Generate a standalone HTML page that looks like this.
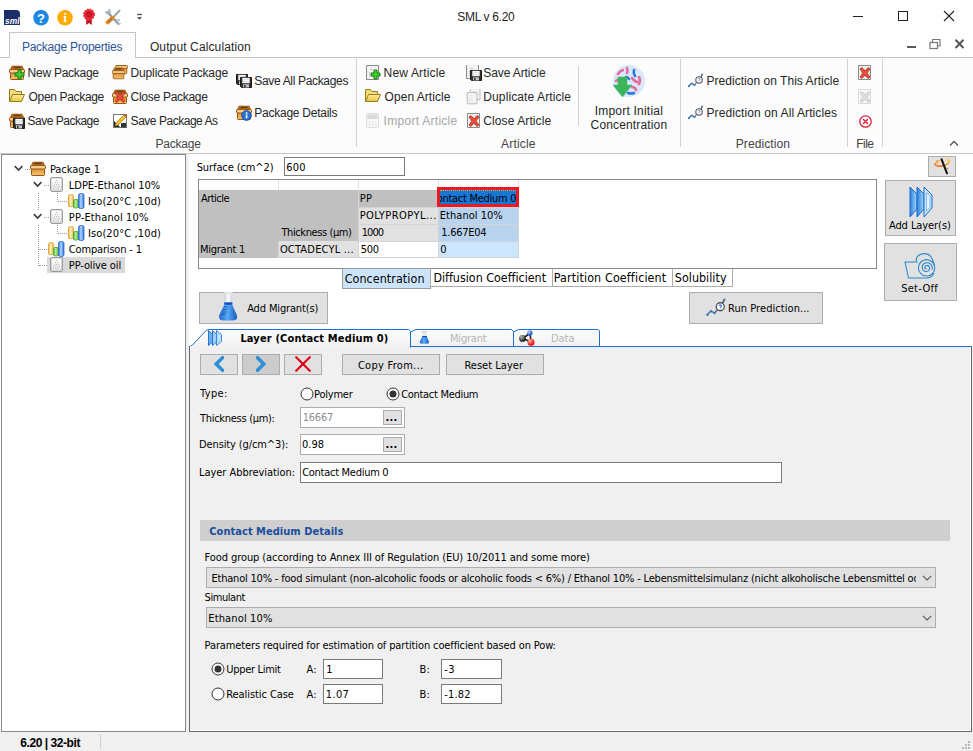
<!DOCTYPE html>
<html><head><meta charset="utf-8"><title>SML v 6.20</title>
<style>
*{box-sizing:border-box;margin:0;padding:0}
html,body{width:973px;height:751px;overflow:hidden;background:#fff}
body{position:relative;font-family:"Liberation Sans",sans-serif;font-size:12px;color:#1e1e1e}
.a{position:absolute;white-space:nowrap}
.sep{position:absolute;width:1px;background:#d2d2d2}
.btn{position:absolute;background:#e1e1e1;border:1px solid #adadad}
.inp{position:absolute;background:#fff;border:1px solid #7a7a7a}
.dv{position:absolute;border-left:1px dotted #a0a0a0;width:1px}
.dh{position:absolute;border-top:1px dotted #a0a0a0;height:1px}
</style></head><body>
<svg width="0" height="0" style="position:absolute">
<defs>
<linearGradient id="gbox" x1="0" y1="0" x2="0" y2="1"><stop offset="0" stop-color="#dc9030"/><stop offset="1" stop-color="#f4c678"/></linearGradient>
<linearGradient id="gfold" x1="0" y1="0" x2="0" y2="1"><stop offset="0" stop-color="#fbeea0"/><stop offset="1" stop-color="#e8c440"/></linearGradient>
<linearGradient id="gdoc" x1="0" y1="0" x2="0" y2="1"><stop offset="0" stop-color="#ffffff"/><stop offset="1" stop-color="#e6e6e6"/></linearGradient>
<linearGradient id="gy" x1="0" y1="0" x2="1" y2="0"><stop offset="0" stop-color="#f0b030"/><stop offset=".45" stop-color="#fff2c8"/><stop offset="1" stop-color="#eeb040"/></linearGradient>
<linearGradient id="gg" x1="0" y1="0" x2="1" y2="0"><stop offset="0" stop-color="#48b828"/><stop offset=".45" stop-color="#b8f0a0"/><stop offset="1" stop-color="#48b028"/></linearGradient>
<linearGradient id="gb" x1="0" y1="0" x2="1" y2="0"><stop offset="0" stop-color="#2a72d8"/><stop offset=".45" stop-color="#b0d8ff"/><stop offset="1" stop-color="#2a6cd0"/></linearGradient>
<symbol id="box" viewBox="0 0 16 16"><path d="M1.5 4.500L3 1.200H13L14.5 4.500Z" fill="#b8701c" stroke="#9a560e"/><path d="M4.5 2.500H11.5" stroke="#5a3408" stroke-width="1.2"/><rect x="1.5" y="7.5" width="13" height="7" rx=".8" fill="url(#gbox)" stroke="#9a560e"/><rect x=".5" y="4.5" width="15" height="3.5" rx=".8" fill="#f2cc90" stroke="#9a560e"/></symbol>
<symbol id="plus" viewBox="0 0 16 16"><path d="M9 5h3v3h3v3h-3v3h-3v-3h-3v-3h3z" fill="#3fd02c" stroke="#1d7a12" stroke-width="1"/></symbol>
<symbol id="folder" viewBox="0 0 16 16"><path d="M.5 13.5 V1.5 H5.5 L7 3.5 H12.5 V6.5" fill="#f3dc7a" stroke="#9a7a1a"/><path d="M.5 13.5 L3.5 6.5 H15.5 L12.5 13.500Z" fill="url(#gfold)" stroke="#9a7a1a"/></symbol>
<symbol id="floppy" viewBox="0 0 16 16"><path d="M4.5 5.5 H15.5 V15.5 H5.5 L4.5 14.500Z" fill="#303030" stroke="#1a1a1a"/><rect x="6.3" y="5.8" width="7.4" height="5.4" fill="#f8f8f8"/><path d="M7 7.500h6M7 9.500h6" stroke="#d0d0d0" stroke-width=".6"/><rect x="7" y="12.3" width="6" height="3.2" fill="#c4c4c4"/><rect x="8" y="13" width="1.6" height="2.5" fill="#333"/></symbol>
<symbol id="redx" viewBox="0 0 16 16"><path d="M3 4 L5 2.5 L8 6 L11 2.5 L13 4 L10 8 L13 12 L11 13.5 L8 10 L5 13.5 L3 12 L6 8Z" fill="#e8503c" stroke="#b02818" stroke-width=".8"/></symbol>
<symbol id="info" viewBox="0 0 16 16"><circle cx="10.5" cy="10.5" r="4.8" fill="#2a72d8" stroke="#184a9c"/><rect x="9.8" y="9.5" width="1.6" height="3.8" fill="#fff"/><rect x="9.8" y="7.3" width="1.6" height="1.5" fill="#fff"/></symbol>
<symbol id="doc" viewBox="0 0 16 16"><path d="M1.5 .5 H13.5 V14.5 H1.500Z" fill="#f2f2f2" stroke="#8a8a8a"/><path d="M4 9.500h1M6 9.500h1M8 9.500h1M4 11.500h1M6 11.500h1M8 11.500h1M4 7.500h1M6 7.500h1M5 4.500h3" stroke="#c4c4c4"/></symbol>
<symbol id="pred" viewBox="0 0 18 16"><path d="M1.5 13.5 L4.5 10.5 L7.5 12 L10 9" fill="none" stroke="#4a6a8a" stroke-width="1.1"/><circle cx="1.8" cy="13.3" r="1" fill="#3a78c8"/><circle cx="4.6" cy="10.6" r="1" fill="#3a78c8"/><circle cx="7.5" cy="12" r="1" fill="#3a78c8"/><circle cx="12" cy="7" r="3.2" fill="#fff" stroke="#555" stroke-width="1.1"/><path d="M13.8 4 L15.2 1.6" stroke="#555" stroke-width="1.2"/><circle cx="15.3" cy="1.3" r=".9" fill="#3a78c8"/><path d="M11 6.200c.3-1 2-1 2 0 0 .8-1 .8-1 1.600M12 8.600v.6" stroke="#3a78c8" stroke-width=".9" fill="none"/></symbol>
<symbol id="chart" viewBox="0 0 17 16"><rect x=".5" y="1.7" width="5" height="12" rx="1.5" fill="url(#gy)" stroke="#d8a030" stroke-width=".8"/><rect x="5.5" y="6.5" width="5" height="8.5" rx="1.5" fill="url(#gg)" stroke="#4aa828" stroke-width=".8"/><rect x="10.5" y=".5" width="5.5" height="15" rx="1.8" fill="url(#gb)" stroke="#2a6cd0" stroke-width=".8"/></symbol>
<symbol id="tdoc" viewBox="0 0 16 16"><rect x="2.650" y=".65" width="11.7" height="13.7" rx="1.5" fill="url(#gdoc)" stroke="#9c9c9c" stroke-width="1.3"/><path d="M8 3.500h1M7 5.500h1M9 5.500h1M6 7.500h1M8 7.500h1M10 7.500h1M5 9.500h1M7 9.500h1M9 9.500h1M11 9.500h1M5 11.500h1M7.5 11.500h1M10 11.500h1" stroke="#bdbdbd"/></symbol>
</defs></svg>
<div class="a" style="left:0;top:0;width:973px;height:32px;background:#fff"></div>
<div class="a" style="left:457.3px;top:9px;line-height:16px;font-family:'Liberation Sans',sans-serif;font-size:12px;letter-spacing:-0.322px;color:#1e1e1e;">SML v 6.20</div><svg class="a" style="left:4px;top:9px" width="17" height="16" viewBox="0 0 17 16"><path d="M0 1H12Q16 1 16 5V16H0Z" fill="#1a2f6a"/><text x="1" y="14.5" font-family="Liberation Sans,sans-serif" font-size="9" font-weight="bold" font-style="italic" fill="#fff" textLength="14.5" lengthAdjust="spacingAndGlyphs">sml</text></svg>
<svg class="a" style="left:33px;top:10px" width="16" height="16"><circle cx="8" cy="7.7" r="7.8" fill="#1e88e5"/><text x="8" y="12.5" text-anchor="middle" font-family="Liberation Sans,sans-serif" font-size="13" font-weight="bold" fill="#fff">?</text></svg>
<svg class="a" style="left:57px;top:10px" width="16" height="16"><circle cx="8" cy="7.7" r="7.8" fill="#ffab00"/><text x="8" y="12" text-anchor="middle" font-family="Liberation Serif,serif" font-size="13" font-weight="bold" fill="#fff">i</text></svg>
<svg class="a" style="left:82px;top:8px" width="14" height="18"><path d="M4.2 9v8l2.8-2 2.8 2V9z" fill="#c4141c"/><circle cx="7" cy="6.5" r="5.3" fill="#e82c3a" stroke="#e82c3a" stroke-width="1.4" stroke-dasharray="1.6 1.180"/><circle cx="7" cy="6.5" r="3.2" fill="#c81828"/></svg>
<svg class="a" style="left:104px;top:8px" width="18" height="18"><path d="M3.5 4l5 5.5 6 6.5" stroke="#8c9c9e" stroke-width="2.2" stroke-linecap="round" fill="none"/><path d="M1.5 3.500q1.5 3 4 1.5 1.5-2-1-4" fill="none" stroke="#a4b2b4" stroke-width="1.6"/><path d="M12 12.500q2-1.5 4 .5M13 16q2 1 3.5-1" fill="none" stroke="#b4c0c2" stroke-width="1.5"/><path d="M15.5 2.500L9.5 9" stroke="#9aa8aa" stroke-width="2" stroke-linecap="round"/><path d="M8.5 10L3.5 14.5" stroke="#f08a1c" stroke-width="4" stroke-linecap="round"/><path d="M8 10.500L4.5 13.7" stroke="#8a7a6a" stroke-width="1.4" stroke-linecap="round"/></svg>
<svg class="a" style="left:136px;top:13px" width="8" height="8"><path d="M1 1.500h5" stroke="#555" stroke-width="1.3"/><path d="M1 4h5L3.5 6.800z" fill="#555"/></svg>
<svg class="a" style="left:840px;top:0" width="133" height="32"><path d="M13 16.500h10" stroke="#222" stroke-width="1"/><rect x="58.5" y="11.5" width="9" height="9" fill="none" stroke="#222" stroke-width="1"/><path d="M104 11l10 10M114 11l-10 10" stroke="#222" stroke-width="1.1"/></svg>
<svg class="a" style="left:900px;top:36px" width="73" height="18"><path d="M7 11h9" stroke="#5a5a5a" stroke-width="2"/><path d="M32.5 6.500v-3h7.500v6.500h-2.5" fill="none" stroke="#777" stroke-width="1.2"/><rect x="30" y="6.5" width="7.5" height="6" fill="#fff" stroke="#777" stroke-width="1.2"/><path d="M55.5 3.700l8 8.300M63.5 3.700l-8 8.3" stroke="#555" stroke-width="2"/></svg>
<div class="a" style="left:0;top:57px;width:973px;height:97px;background:#fcfcfc;border-top:1px solid #c6c6c6;border-bottom:1px solid #c9c9c9"></div>
<div class="a" style="left:9px;top:32px;width:127px;height:26px;border:1px solid #c6c6c6;border-bottom:0;background:#fcfcfc"></div>
<div class="a" style="left:21.9px;top:39px;line-height:16px;font-family:'Liberation Sans',sans-serif;font-size:12px;letter-spacing:-0.247px;color:#2b579a;">Package Properties</div><div class="a" style="left:149.9px;top:39px;line-height:16px;font-family:'Liberation Sans',sans-serif;font-size:12px;letter-spacing:0.124px;color:#262626;">Output Calculation</div><svg class="a" style="left:9px;top:65px;" width="16" height="16"><use href="#box"/><use href="#plus"/></svg>
<div class="a" style="left:27.6px;top:65px;line-height:16px;font-family:'Liberation Sans',sans-serif;font-size:12px;letter-spacing:-0.26px;color:#262626;">New Package</div><svg class="a" style="left:9px;top:88px;" width="16" height="16"><use href="#folder"/></svg>
<div class="a" style="left:28.6px;top:89px;line-height:16px;font-family:'Liberation Sans',sans-serif;font-size:12px;letter-spacing:-0.336px;color:#262626;">Open Package</div><svg class="a" style="left:9px;top:113px;" width="16" height="16"><use href="#box"/><use href="#floppy"/></svg>
<div class="a" style="left:27.6px;top:113px;line-height:16px;font-family:'Liberation Sans',sans-serif;font-size:12px;letter-spacing:-0.509px;color:#262626;">Save Package</div><svg class="a" style="left:112px;top:65px;" width="16" height="16"><use href="#box" x="3" y="-3" width="13" height="13"/><use href="#box" x="0" y="2" width="13" height="13"/></svg>
<div class="a" style="left:130.6px;top:65px;line-height:16px;font-family:'Liberation Sans',sans-serif;font-size:12px;letter-spacing:-0.162px;color:#262626;">Duplicate Package</div><svg class="a" style="left:112px;top:89px;" width="16" height="16"><use href="#box"/><use href="#redx"/></svg>
<div class="a" style="left:130.6px;top:89px;line-height:16px;font-family:'Liberation Sans',sans-serif;font-size:12px;letter-spacing:-0.283px;color:#262626;">Close Package</div><svg class="a" style="left:112px;top:113px;" width="16" height="16"><rect x="1.5" y="1.5" width="13" height="13" fill="#fff" stroke="#777"/><path d="M2 14 L2 8 L8 14Z" fill="#222"/><rect x="9" y="10" width="5" height="4.5" fill="#333"/><path d="M3 13 L4 10 L12 2 L14 4 L6 12Z" fill="#f4c430" stroke="#a07810" stroke-width=".8"/><path d="M12 2 L13 1 L15 3 L14 4Z" fill="#e04030"/></svg>
<div class="a" style="left:130.6px;top:113px;line-height:16px;font-family:'Liberation Sans',sans-serif;font-size:12px;letter-spacing:-0.471px;color:#262626;">Save Package As</div><svg class="a" style="left:236px;top:72px;" width="16" height="16"><use href="#floppy" x="-4" y="-3"/><use href="#floppy" x="0" y="0"/></svg>
<div class="a" style="left:254.3px;top:73px;line-height:16px;font-family:'Liberation Sans',sans-serif;font-size:12px;letter-spacing:-0.331px;color:#262626;">Save All Packages</div><svg class="a" style="left:236px;top:105px;" width="16" height="16"><use href="#box"/><use href="#info"/></svg>
<div class="a" style="left:254.3px;top:105px;line-height:16px;font-family:'Liberation Sans',sans-serif;font-size:12px;letter-spacing:-0.25px;color:#262626;">Package Details</div><svg class="a" style="left:365px;top:65px;" width="16" height="16"><use href="#doc"/><use href="#plus"/></svg>
<div class="a" style="left:383.6px;top:65px;line-height:16px;font-family:'Liberation Sans',sans-serif;font-size:12px;letter-spacing:0.16px;color:#262626;">New Article</div><svg class="a" style="left:365px;top:88px;" width="16" height="16"><use href="#folder"/></svg>
<div class="a" style="left:384.6px;top:89px;line-height:16px;font-family:'Liberation Sans',sans-serif;font-size:12px;letter-spacing:0.036px;color:#262626;">Open Article</div><svg class="a" style="left:365px;top:113px;" width="16" height="16"><rect x="1.5" y=".5" width="12" height="14" rx="1" fill="#f8f8f8" stroke="#dedede"/><rect x="2.5" y="1.5" width="10" height="4.5" fill="#d8d8d8"/><path d="M4 9h1.500M7 9h1.500M10 9h1.500M4 12h1.500M7 12h1.500M10 12h1.5" stroke="#d8d8d8"/></svg>
<div class="a" style="left:383.6px;top:113px;line-height:16px;font-family:'Liberation Sans',sans-serif;font-size:12px;letter-spacing:0.277px;color:#a6a6a6;">Import Article</div><svg class="a" style="left:466px;top:65px;" width="16" height="16"><use href="#doc" x="-1" y="-1"/><use href="#floppy" x="0" y="0"/></svg>
<div class="a" style="left:483.3px;top:65px;line-height:16px;font-family:'Liberation Sans',sans-serif;font-size:12px;letter-spacing:-0.1px;color:#262626;">Save Article</div><svg class="a" style="left:466px;top:89px;" width="16" height="16"><g opacity=".7"><use href="#doc" x="3" y="-1" width="13" height="13"/><use href="#doc" x="0" y="3" width="13" height="13"/></g></svg>
<div class="a" style="left:483.3px;top:89px;line-height:16px;font-family:'Liberation Sans',sans-serif;font-size:12px;letter-spacing:0.106px;color:#262626;">Duplicate Article</div><svg class="a" style="left:466px;top:113px;" width="16" height="16"><use href="#doc"/><use href="#redx"/></svg>
<div class="a" style="left:483.3px;top:113px;line-height:16px;font-family:'Liberation Sans',sans-serif;font-size:12px;letter-spacing:0.092px;color:#262626;">Close Article</div><svg class="a" style="left:687px;top:73px;" width="18" height="16"><use href="#pred"/></svg>
<div class="a" style="left:706.5px;top:73px;line-height:16px;font-family:'Liberation Sans',sans-serif;font-size:12px;letter-spacing:0.032px;color:#262626;">Prediction on This Article</div><svg class="a" style="left:687px;top:105px;" width="18" height="16"><use href="#pred"/></svg>
<div class="a" style="left:706.5px;top:105px;line-height:16px;font-family:'Liberation Sans',sans-serif;font-size:12px;letter-spacing:0.096px;color:#262626;">Prediction on All Articles</div><svg class="a" style="left:857px;top:65px;" width="16" height="16"><use href="#doc"/><use href="#redx"/></svg>
<svg class="a" style="left:857px;top:89px;opacity:.3" width="16" height="16"><use href="#doc"/><path d="M3 4 L5 2.5 L8 6 L11 2.5 L13 4 L10 8 L13 12 L11 13.5 L8 10 L5 13.5 L3 12 L6 8Z" fill="#999" stroke="#666"/></svg>
<svg class="a" style="left:857px;top:113px;" width="16" height="16"><circle cx="8.5" cy="8.5" r="5.7" fill="#fff" stroke="#d8243c" stroke-width="1.3"/><path d="M6 6l5 5M11 6l-5 5" stroke="#d8243c" stroke-width="1.3"/></svg>
<svg class="a" style="left:612px;top:65px" width="34" height="33" viewBox="0 0 34 33"><circle cx="17" cy="16" r="16" fill="#d9e7fa"/>
<g stroke-linecap="round" stroke-width="2.6" fill="none"><path d="M6 9q2-3 5-4" stroke="#e86a9a"/><path d="M15 3q1 3 0 5" stroke="#e86a9a"/><path d="M22 5q-1 3 1 6" stroke="#2a7ad8"/><path d="M27 12q2 3 0 7" stroke="#e86a9a"/><path d="M4 16q2-2 5-1" stroke="#e86a9a"/><path d="M20 13q2 3 5 4" stroke="#e86a9a"/><path d="M14 12q2 0 3 2" stroke="#2a7ad8"/><path d="M20 22q3 0 4 3" stroke="#e86a9a"/><path d="M16 28q3 1 6 0" stroke="#2a7ad8"/></g>
<path d="M6 12h9v8h5l-9.5 12-9.5-12h5z" fill="#3cb45a" stroke="#3cb45a" stroke-width=".5"/></svg>
<div class="a" style="left:594.7px;top:103px;line-height:16px;font-family:'Liberation Sans',sans-serif;font-size:12px;letter-spacing:0.215px;color:#262626;">Import Initial</div><div class="a" style="left:590.6px;top:117px;line-height:16px;font-family:'Liberation Sans',sans-serif;font-size:12px;letter-spacing:0.15px;color:#262626;">Concentration</div><div class="sep" style="left:356px;top:59px;height:88px"></div>
<div class="sep" style="left:680px;top:59px;height:88px"></div>
<div class="sep" style="left:847px;top:59px;height:88px"></div>
<div class="sep" style="left:882px;top:59px;height:88px"></div>
<div class="sep" style="left:578px;top:66px;height:60px"></div>
<div class="a" style="left:155.4px;top:136px;line-height:16px;font-family:'Liberation Sans',sans-serif;font-size:12px;letter-spacing:-0.2px;color:#444;">Package</div><div class="a" style="left:501px;top:136px;line-height:16px;font-family:'Liberation Sans',sans-serif;font-size:12px;letter-spacing:0.2px;color:#444;">Article</div><div class="a" style="left:735.7px;top:136px;line-height:16px;font-family:'Liberation Sans',sans-serif;font-size:12px;letter-spacing:0.1px;color:#444;">Prediction</div><div class="a" style="left:856.3px;top:136px;line-height:16px;font-family:'Liberation Sans',sans-serif;font-size:12px;letter-spacing:-0.567px;color:#444;">File</div><svg class="a" style="left:948px;top:139px" width="12" height="8"><path d="M2 6.500l4-4 4 4" fill="none" stroke="#555" stroke-width="1.4"/></svg>
<div class="a" style="left:0;top:154px;width:973px;height:597px;background:#f0f0f0"></div><div class="a" style="left:189px;top:154px;width:784px;height:193px;background:#fff"></div>
<div class="a" style="left:0;top:154px;width:1px;height:578px;background:#fff"></div><div class="a" style="left:1px;top:154px;width:185px;height:578px;background:#fff;border:1px solid #828790"></div>
<div class="dv" style="left:38px;top:193px;height:17px"></div><div class="dv" style="left:38px;top:225px;height:41px"></div><div class="dh" style="left:25px;top:169px;width:5px"></div><div class="dh" style="left:44px;top:185px;width:5px"></div><div class="dh" style="left:44px;top:217px;width:5px"></div><div class="dh" style="left:39px;top:249px;width:10px"></div><div class="dh" style="left:39px;top:265px;width:10px"></div>
<div class="dv" style="left:57px;top:193px;height:9px"></div><div class="dh" style="left:57px;top:201px;width:10px"></div><div class="dv" style="left:57px;top:225px;height:9px"></div><div class="dh" style="left:57px;top:233px;width:10px"></div>
<svg class="a" style="left:14px;top:165px" width="10" height="7"><path d="M.8 1.200l3.8 3.9 3.8-3.9" fill="none" stroke="#404040" stroke-width="1.7"/></svg>
<svg class="a" style="left:30px;top:161px" width="16" height="16"><use href="#box"/></svg>
<div class="a" style="left:49.9px;top:162px;line-height:16px;font-family:'DejaVu Sans Condensed','DejaVu Sans','Liberation Sans',sans-serif;font-size:11px;letter-spacing:-0.038px;color:#000;">Package 1</div><svg class="a" style="left:33px;top:181px" width="10" height="7"><path d="M.8 1.200l3.8 3.9 3.8-3.9" fill="none" stroke="#404040" stroke-width="1.7"/></svg>
<svg class="a" style="left:48px;top:177px" width="16" height="16"><use href="#tdoc"/></svg>
<div class="a" style="left:68.8px;top:178px;line-height:16px;font-family:'DejaVu Sans Condensed','DejaVu Sans','Liberation Sans',sans-serif;font-size:11px;letter-spacing:-0.02px;color:#000;">LDPE-Ethanol 10%</div><svg class="a" style="left:68px;top:193px" width="17" height="16"><use href="#chart"/></svg>
<div class="a" style="left:87.9px;top:194px;line-height:16px;font-family:'DejaVu Sans Condensed','DejaVu Sans','Liberation Sans',sans-serif;font-size:11px;letter-spacing:0.123px;color:#000;">Iso(20°C ,10d)</div><svg class="a" style="left:33px;top:213px" width="10" height="7"><path d="M.8 1.200l3.8 3.9 3.8-3.9" fill="none" stroke="#404040" stroke-width="1.7"/></svg>
<svg class="a" style="left:48px;top:209px" width="16" height="16"><use href="#tdoc"/></svg>
<div class="a" style="left:68.8px;top:210px;line-height:16px;font-family:'DejaVu Sans Condensed','DejaVu Sans','Liberation Sans',sans-serif;font-size:11px;letter-spacing:0.123px;color:#000;">PP-Ethanol 10%</div><svg class="a" style="left:68px;top:225px" width="17" height="16"><use href="#chart"/></svg>
<div class="a" style="left:87.9px;top:226px;line-height:16px;font-family:'DejaVu Sans Condensed','DejaVu Sans','Liberation Sans',sans-serif;font-size:11px;letter-spacing:0.123px;color:#000;">Iso(20°C ,10d)</div><svg class="a" style="left:48px;top:241px" width="17" height="16"><use href="#chart"/></svg>
<div class="a" style="left:68.8px;top:242px;line-height:16px;font-family:'DejaVu Sans Condensed','DejaVu Sans','Liberation Sans',sans-serif;font-size:11px;letter-spacing:-0.169px;color:#000;">Comparison - 1</div><div class="a" style="left:47px;top:257px;width:78px;height:16px;background:#d9d9d9"></div>
<svg class="a" style="left:48px;top:257px" width="16" height="16"><use href="#tdoc"/></svg>
<div class="a" style="left:68.8px;top:258px;line-height:16px;font-family:'DejaVu Sans Condensed','DejaVu Sans','Liberation Sans',sans-serif;font-size:11px;letter-spacing:-0.118px;color:#000;">PP-olive oil</div><div class="a" style="left:196.7px;top:160px;line-height:16px;font-family:'DejaVu Sans Condensed','DejaVu Sans','Liberation Sans',sans-serif;font-size:11px;letter-spacing:-0.1px;color:#000;">Surface (cm^2)</div><div class="inp" style="left:284px;top:157px;width:121px;height:19px"></div><div class="a" style="left:286.2px;top:160px;line-height:16px;font-family:'DejaVu Sans Condensed','DejaVu Sans','Liberation Sans',sans-serif;font-size:11px;letter-spacing:0.2px;color:#000;">600</div><div class="a" style="left:198px;top:179px;width:679px;height:90px;background:#fff;border:1px solid #7f8790"></div>
<div class="a" style="left:278px;top:180px;width:1px;height:10px;background:#e4e4e4"></div>
<div class="a" style="left:358px;top:180px;width:1px;height:10px;background:#e4e4e4"></div>
<div class="a" style="left:438px;top:180px;width:1px;height:10px;background:#e4e4e4"></div>
<div class="a" style="left:518px;top:180px;width:1px;height:10px;background:#e4e4e4"></div>
<div class="a" style="left:199px;top:190px;width:240px;height:17px;background:#c0c0c0"></div><div class="a" style="left:199px;top:207px;width:160px;height:34px;background:#c0c0c0"></div><div class="a" style="left:199px;top:241px;width:80px;height:17px;background:#c0c0c0"></div><div class="a" style="left:279px;top:241px;width:80px;height:17px;background:#e1e1e1"></div><div class="a" style="left:359px;top:207px;width:80px;height:34px;background:#e1e1e1"></div><div class="a" style="left:359px;top:241px;width:80px;height:17px;background:#fff"></div><div class="a" style="left:439px;top:207px;width:80px;height:34px;background:#b9d3ee"></div><div class="a" style="left:439px;top:241px;width:80px;height:17px;background:#cce6ff"></div>
<div class="a" style="left:358px;top:207px;width:161px;height:1px;background:#d4d4d4"></div><div class="a" style="left:358px;top:224px;width:161px;height:1px;background:#d4d4d4"></div><div class="a" style="left:358px;top:241px;width:161px;height:1px;background:#d4d4d4"></div><div class="a" style="left:358px;top:257px;width:161px;height:1px;background:#d4d4d4"></div><div class="a" style="left:358px;top:190px;width:1px;height:68px;background:#d4d4d4"></div><div class="a" style="left:438px;top:190px;width:1px;height:68px;background:#d4d4d4"></div><div class="a" style="left:518px;top:190px;width:1px;height:68px;background:#d4d4d4"></div><div class="a" style="left:278px;top:241px;width:1px;height:17px;background:#d4d4d4"></div><div class="a" style="left:279px;top:257px;width:80px;height:1px;background:#d4d4d4"></div>
<div class="a" style="left:201px;top:191px;line-height:16px;font-family:'DejaVu Sans Condensed','DejaVu Sans','Liberation Sans',sans-serif;font-size:11px;letter-spacing:-0.533px;color:#000;">Article</div><div class="a" style="left:281.4px;top:225px;line-height:16px;font-family:'DejaVu Sans Condensed','DejaVu Sans','Liberation Sans',sans-serif;font-size:11px;letter-spacing:-0.4px;color:#000;">Thickness (µm)</div><div class="a" style="left:200px;top:242px;line-height:16px;font-family:'DejaVu Sans Condensed','DejaVu Sans','Liberation Sans',sans-serif;font-size:11px;letter-spacing:-0.262px;color:#000;">Migrant 1</div><div class="a" style="left:279.9px;top:242px;line-height:16px;font-family:'DejaVu Sans Condensed','DejaVu Sans','Liberation Sans',sans-serif;font-size:11px;letter-spacing:0.192px;color:#000;">OCTADECYL ...</div><div class="a" style="left:359.7px;top:191px;line-height:16px;font-family:'DejaVu Sans Condensed','DejaVu Sans','Liberation Sans',sans-serif;font-size:11px;letter-spacing:0.3px;color:#000;">PP</div><div class="a" style="left:359.7px;top:208px;line-height:16px;font-family:'DejaVu Sans Condensed','DejaVu Sans','Liberation Sans',sans-serif;font-size:11px;letter-spacing:0.45px;color:#000;">POLYPROPYL...</div><div class="a" style="left:361.7px;top:225px;line-height:16px;font-family:'DejaVu Sans Condensed','DejaVu Sans','Liberation Sans',sans-serif;font-size:11px;letter-spacing:-0.9px;color:#000;">1000</div><div class="a" style="left:360.7px;top:242px;line-height:16px;font-family:'DejaVu Sans Condensed','DejaVu Sans','Liberation Sans',sans-serif;font-size:11px;letter-spacing:-0.3px;color:#000;">500</div><div class="a" style="left:439.8px;top:208px;line-height:16px;font-family:'DejaVu Sans Condensed','DejaVu Sans','Liberation Sans',sans-serif;font-size:11px;letter-spacing:0.03px;color:#000;">Ethanol 10%</div><div class="a" style="left:441.2px;top:225px;line-height:16px;font-family:'DejaVu Sans Condensed','DejaVu Sans','Liberation Sans',sans-serif;font-size:11px;letter-spacing:-0.243px;color:#000;">1.667E04</div><div class="a" style="left:440.2px;top:242px;line-height:16px;font-family:'DejaVu Sans Condensed','DejaVu Sans','Liberation Sans',sans-serif;font-size:11px;color:#000;">0</div><div class="a" style="left:437px;top:187px;width:82px;height:20px;background:#1777d4;border:3px solid #ea1a24;overflow:hidden"><div class="a" style="left:0;top:0;width:76px;height:1px;border-top:1px dotted #e0b040"></div><div class="a" style="left:-440px;top:-190px"><div class="a" style="left:430px;top:191px;line-height:16px;font-family:'DejaVu Sans Condensed','DejaVu Sans','Liberation Sans',sans-serif;font-size:11px;letter-spacing:-0.28px;color:#000;">Contact Medium 0</div></div></div>
<div class="a" style="left:342px;top:268px;width:89px;height:21px;background:#cce4fb;border:1px solid #9c9c9c"></div><div class="a" style="left:430px;top:268px;width:123px;height:19px;background:#fff;border:1px solid #adadad"></div><div class="a" style="left:552px;top:268px;width:121px;height:19px;background:#fff;border:1px solid #adadad"></div><div class="a" style="left:672px;top:268px;width:61px;height:19px;background:#fff;border:1px solid #adadad"></div><div class="a" style="left:431px;top:268px;width:446px;height:1px;background:#7f8790"></div>
<div class="a" style="left:344.7px;top:271px;line-height:16px;font-family:'DejaVu Sans Condensed','DejaVu Sans','Liberation Sans',sans-serif;font-size:12.4px;letter-spacing:0.075px;color:#000;">Concentration</div><div class="a" style="left:433.4px;top:270px;line-height:16px;font-family:'DejaVu Sans Condensed','DejaVu Sans','Liberation Sans',sans-serif;font-size:12.4px;letter-spacing:-0.01px;color:#000;">Diffusion Coefficient</div><div class="a" style="left:553.8px;top:270px;line-height:16px;font-family:'DejaVu Sans Condensed','DejaVu Sans','Liberation Sans',sans-serif;font-size:12.4px;letter-spacing:0.125px;color:#000;">Partition Coefficient</div><div class="a" style="left:674.8px;top:270px;line-height:16px;font-family:'DejaVu Sans Condensed','DejaVu Sans','Liberation Sans',sans-serif;font-size:12.4px;letter-spacing:0.033px;color:#000;">Solubility</div><div class="btn" style="left:199px;top:292px;width:129px;height:32px"></div><div class="a" style="left:247.2px;top:301px;line-height:16px;font-family:'DejaVu Sans Condensed','DejaVu Sans','Liberation Sans',sans-serif;font-size:11px;letter-spacing:-0.146px;color:#000;">Add Migrant(s)</div><svg class="a" style="left:217px;top:292px" width="22" height="30" viewBox="0 0 22 30"><defs><linearGradient id="gfl" x1="0" y1="0" x2="1" y2="0"><stop offset="0" stop-color="#1c66cc"/><stop offset=".45" stop-color="#5cacf6"/><stop offset="1" stop-color="#165cc0"/></linearGradient><linearGradient id="gnk" x1="0" y1="0" x2="1" y2="0"><stop offset="0" stop-color="#cfd4da"/><stop offset=".5" stop-color="#fafbfc"/><stop offset="1" stop-color="#cfd4da"/></linearGradient></defs><path d="M7.3 .4h8v10.300h-8z" fill="url(#gnk)"/><path d="M6.8 .3h9v1.400h-9z" fill="#e4e7ea"/><path d="M7.3 10.600h8v1.500q0 1 .8 2.600l3.6 8q1.8 5.6-3.7 5.700H6.500Q1 28.7 2.3 23l3.9-8.300q1.1-1.6 1.1-2.600z" fill="url(#gfl)"/><path d="M7.3 10.600h8v1.700q-4 1.2-8 0z" fill="#1450c0"/><path d="M7 15h4M6 17.500h4.500M5 20h4.800M4 22.500h4.8" stroke="#1448a8" stroke-width=".9" opacity=".8"/></svg>
<div class="btn" style="left:689px;top:292px;width:134px;height:32px"></div><div class="a" style="left:728px;top:301px;line-height:16px;font-family:'DejaVu Sans Condensed','DejaVu Sans','Liberation Sans',sans-serif;font-size:11px;letter-spacing:0.056px;color:#000;">Run Prediction...</div><svg class="a" style="left:705px;top:298px" width="23" height="20" viewBox="0 0 18 16"><use href="#pred"/></svg>
<div class="btn" style="left:928px;top:156px;width:28px;height:21px"></div><svg class="a" style="left:933px;top:157px" width="19" height="19"><defs><linearGradient id="gw" x1="0" y1="1" x2="1" y2="0"><stop offset="0" stop-color="#f05a10"/><stop offset=".5" stop-color="#f8a018"/><stop offset="1" stop-color="#ffe020"/></linearGradient></defs><ellipse cx="9.2" cy="5.8" rx="7.3" ry="3" fill="none" stroke="url(#gw)" stroke-width="1.5" transform="rotate(-14 9.2 5.8)" stroke-dasharray="26 4"/><path d="M8.6 2.300L14 16.3" stroke="#111" stroke-width="2" stroke-linecap="round"/><path d="M3.5 3.500l1.5 1M4 7.500l1-1" stroke="#f06020" stroke-width=".8"/><circle cx="14.5" cy="11.5" r=".8" fill="#f07020"/></svg>
<div class="btn" style="left:885px;top:180px;width:71px;height:56px"></div><div class="a" style="left:888.9px;top:218px;line-height:16px;font-family:'DejaVu Sans Condensed','DejaVu Sans','Liberation Sans',sans-serif;font-size:11px;letter-spacing:-0.073px;color:#000;">Add Layer(s)</div><svg class="a" style="left:909px;top:186px" width="24" height="32" viewBox="0 0 24 32"><defs><linearGradient id="gly" x1="0" y1="0" x2="1" y2="0"><stop offset="0" stop-color="#2a80dc"/><stop offset="1" stop-color="#a8d8ff"/></linearGradient></defs><path d="M1 1l7 7v15l-7 8z" fill="url(#gly)" stroke="#1a6ccc"/><path d="M8 1l7 7v15l-7 8z" fill="url(#gly)" stroke="#1a6ccc"/><path d="M15 1l8 8v13l-8 9z" fill="#c4e4ff" stroke="#1a6ccc"/><path d="M17.5 6.500l3.5 3.500v11l-3.5 4z" fill="#e4f2ff" stroke="#6aa8e8" stroke-width=".7"/></svg>
<div class="btn" style="left:884px;top:243px;width:73px;height:58px"></div><div class="a" style="left:901.2px;top:281px;line-height:16px;font-family:'DejaVu Sans Condensed','DejaVu Sans','Liberation Sans',sans-serif;font-size:11px;letter-spacing:0.267px;color:#000;">Set-Off</div><svg class="a" style="left:904px;top:252px" width="33" height="29" viewBox="0 0 33 29"><g fill="none" stroke="#2a88d0" stroke-width="1.1" stroke-linejoin="round"><path d="M13.8 10H1L4.5 26H23"/><path d="M12.3 9.500Q11.5 2.5 19.5 1.600Q26.5 1.3 28.5 7.500L30.6 13.5"/><circle cx="22.6" cy="15.8" r="8.2"/><path d="M22.6 16.7 L22.4 16.8 L22.1 16.8 L21.8 16.7 L21.6 16.6 L21.3 16.4 L21.1 16.1 L21.0 15.8 L20.9 15.4 L21.0 15.0 L21.1 14.6 L21.4 14.2 L21.7 13.9 L22.2 13.6 L22.7 13.5 L23.2 13.5 L23.7 13.6 L24.3 13.8 L24.8 14.2 L25.2 14.7 L25.4 15.3 L25.6 15.9 L25.6 16.6 L25.4 17.3 L25.1 18.0 L24.6 18.6 L24.0 19.0 L23.2 19.3 L22.4 19.5 L21.6 19.5 L20.7 19.2 L19.9 18.8 L19.3 18.2 L18.7 17.4 L18.4 16.5 L18.2 15.5 L18.3 14.5 L18.6 13.5 L19.1 12.6 L19.9 11.8 L20.8 11.2 L21.8 10.9 L23.0 10.7 L24.1 10.8 L25.3 11.2 L26.3 11.9 L27.2 12.7 L27.8 13.8 L28.2 15.0 L28.4 16.3 L28.2 17.6"/><path d="M23 26Q28 25.5 30 21"/></g></svg>
<div class="a" style="left:189px;top:346px;width:783px;height:386px;background:#f0f0f0;border:1px solid #696969;border-top:1px solid #1a6fd0;box-shadow:inset -1px -1px 0 #fff"></div>
<svg class="a" style="left:186px;top:326px" width="420" height="22" viewBox="0 0 420 22"><defs><linearGradient id="gtab" x1="0" y1="0" x2="0" y2="1"><stop offset="0" stop-color="#ffffff"/><stop offset="1" stop-color="#f0f0f0"/></linearGradient></defs>
<path d="M224.5 20V6L230 3.500H325.600L327.5 5.500V20" fill="url(#gtab)" stroke="#1a6fd0"/>
<path d="M327.5 20V6L332.7 3.500H412L413.5 5V20" fill="url(#gtab)" stroke="#1a6fd0"/>
<path d="M3.5 21.500V20.500L6 19.500L20 4.500L23 3.500H222.500L224.5 5.500V21.5" fill="url(#gtab)" stroke="#1a6fd0"/>
<rect x="4" y="20" width="220" height="2" fill="#f0f0f0"/>
</svg>
<svg class="a" style="left:207px;top:330px" width="16" height="16"><path d="M1.5 .5l4 3.500v8l-4 3.500z" fill="#6ab0f0" stroke="#2a74cc"/><path d="M5.5 .5l4 3.500v8l-4 3.500z" fill="#9cd0fa" stroke="#2a74cc"/><path d="M9.5 .5l5 4v7l-5 4z" fill="#d8eeff" stroke="#3a88dc"/><path d="M11 3.500l2 1.800v5.400l-2 1.800z" fill="none" stroke="#8cc0f0" stroke-width=".7"/></svg>
<div class="a" style="left:240.4px;top:331px;line-height:16px;font-family:'DejaVu Sans Condensed','DejaVu Sans','Liberation Sans',sans-serif;font-size:11px;font-weight:bold;letter-spacing:0.148px;color:#000;">Layer (Contact Medium 0)</div><svg class="a" style="left:418px;top:331px" width="12" height="14"><path d="M4.2 .3h4.600v4.700h-4.600z" fill="#e8ebee"/><path d="M3.8 .2h5.400v1.100h-5.400z" fill="#c8ccd2"/><path d="M4.2 5h4.600v.8l2 4.200q.8 2.6-1.6 2.700H3.600Q1.2 12.6 2 10l2.2-4.200z" fill="url(#gfl)"/><path d="M4.2 5h4.600v.9q-2.3.6-4.6 0z" fill="#1450c0"/></svg>
<div class="a" style="left:450px;top:331px;line-height:16px;font-family:'DejaVu Sans Condensed','DejaVu Sans','Liberation Sans',sans-serif;font-size:11px;letter-spacing:-0.2px;color:#b4b4b4;">Migrant</div><svg class="a" style="left:519px;top:330px" width="18" height="16"><defs><radialGradient id="rk" cx=".35" cy=".3" r=".7"><stop offset="0" stop-color="#bbb"/><stop offset="1" stop-color="#111"/></radialGradient><radialGradient id="rr" cx=".35" cy=".3" r=".7"><stop offset="0" stop-color="#ffb0a0"/><stop offset="1" stop-color="#e00000"/></radialGradient><radialGradient id="rbl" cx=".35" cy=".3" r=".7"><stop offset="0" stop-color="#b0d0ff"/><stop offset="1" stop-color="#1048c8"/></radialGradient></defs><path d="M4 8.500L11 3M11 3L12 12M4 8.500L12 12" stroke="#222" stroke-width="1.6"/><circle cx="3.5" cy="8.4" r="3.4" fill="url(#rk)"/><circle cx="10.8" cy="3" r="2.7" fill="url(#rbl)"/><circle cx="12" cy="12.2" r="3.5" fill="url(#rr)"/></svg>
<div class="a" style="left:550.9px;top:331px;line-height:16px;font-family:'DejaVu Sans Condensed','DejaVu Sans','Liberation Sans',sans-serif;font-size:11px;color:#b4b4b4;">Data</div><div class="btn" style="left:200px;top:354px;width:38px;height:21px"></div><div class="btn" style="left:242px;top:354px;width:38px;height:21px;background:#cccccc"></div><div class="btn" style="left:284px;top:354px;width:38px;height:21px"></div>
<svg class="a" style="left:200px;top:354px" width="122" height="21"><g fill="none" stroke-linecap="round" stroke-linejoin="miter"><path d="M22.5 3.700L16.2 10l6.3 6.3" stroke="#2f8ed8" stroke-width="3.5"/><path d="M57.5 3.700l6.3 6.3-6.3 6.3" stroke="#2f8ed8" stroke-width="3.5"/><path d="M96.2 3.200l13.6 13.600M109.8 3.200l-13.6 13.6" stroke="#e00018" stroke-width="2.2"/></g></svg>
<div class="btn" style="left:342px;top:354px;width:98px;height:21px"></div><div class="a" style="left:357.9px;top:358px;line-height:16px;font-family:'DejaVu Sans Condensed','DejaVu Sans','Liberation Sans',sans-serif;font-size:11px;letter-spacing:0.282px;color:#000;">Copy From...</div><div class="btn" style="left:446px;top:354px;width:98px;height:21px"></div><div class="a" style="left:464.4px;top:358px;line-height:16px;font-family:'DejaVu Sans Condensed','DejaVu Sans','Liberation Sans',sans-serif;font-size:11px;letter-spacing:0.03px;color:#000;">Reset Layer</div><div class="a" style="left:200px;top:386px;line-height:16px;font-family:'DejaVu Sans Condensed','DejaVu Sans','Liberation Sans',sans-serif;font-size:11px;letter-spacing:0.35px;color:#000;">Type:</div><svg class="a" style="left:299.5px;top:386.5px" width="14" height="14"><circle cx="7" cy="7" r="6" fill="#fff" stroke="#333" stroke-width="1"/></svg>
<div class="a" style="left:314px;top:387px;line-height:16px;font-family:'DejaVu Sans Condensed','DejaVu Sans','Liberation Sans',sans-serif;font-size:11px;letter-spacing:-0.2px;color:#000;">Polymer</div><svg class="a" style="left:385.5px;top:386.5px" width="14" height="14"><circle cx="7" cy="7" r="6" fill="#fff" stroke="#333" stroke-width="1"/><circle cx="7" cy="7" r="3.5" fill="#333"/></svg>
<div class="a" style="left:401.2px;top:387px;line-height:16px;font-family:'DejaVu Sans Condensed','DejaVu Sans','Liberation Sans',sans-serif;font-size:11px;letter-spacing:-0.3px;color:#000;">Contact Medium</div><div class="a" style="left:200px;top:411px;line-height:16px;font-family:'DejaVu Sans Condensed','DejaVu Sans','Liberation Sans',sans-serif;font-size:11px;letter-spacing:-0.293px;color:#000;">Thickness (µm):</div><div class="inp" style="left:300px;top:407px;width:105px;height:21px;border-color:#adadad"></div><div class="btn" style="left:383px;top:410px;width:19px;height:15px;border-color:#adadad"></div><div class="a" style="left:302.7px;top:410px;line-height:16px;font-family:'DejaVu Sans Condensed','DejaVu Sans','Liberation Sans',sans-serif;font-size:11px;letter-spacing:-0.225px;color:#8c8c8c;">16667</div><div class="a" style="left:385.4px;top:410px;line-height:16px;font-family:'DejaVu Sans Condensed','DejaVu Sans','Liberation Sans',sans-serif;font-size:11px;font-weight:bold;letter-spacing:0.3px;color:#000;">...</div><div class="a" style="left:199px;top:437px;line-height:16px;font-family:'DejaVu Sans Condensed','DejaVu Sans','Liberation Sans',sans-serif;font-size:11px;letter-spacing:-0.119px;color:#000;">Density (g/cm^3):</div><div class="inp" style="left:300px;top:434px;width:105px;height:21px;border-color:#adadad"></div><div class="btn" style="left:383px;top:437px;width:19px;height:15px;border-color:#adadad"></div><div class="a" style="left:302px;top:437px;line-height:16px;font-family:'DejaVu Sans Condensed','DejaVu Sans','Liberation Sans',sans-serif;font-size:11px;letter-spacing:0.033px;color:#000;">0.98</div><div class="a" style="left:385.4px;top:437px;line-height:16px;font-family:'DejaVu Sans Condensed','DejaVu Sans','Liberation Sans',sans-serif;font-size:11px;font-weight:bold;letter-spacing:0.3px;color:#000;">...</div><div class="a" style="left:199px;top:465px;line-height:16px;font-family:'DejaVu Sans Condensed','DejaVu Sans','Liberation Sans',sans-serif;font-size:11px;letter-spacing:-0.044px;color:#000;">Layer Abbreviation:</div><div class="inp" style="left:300px;top:462px;width:482px;height:21px"></div><div class="a" style="left:302.2px;top:465px;line-height:16px;font-family:'DejaVu Sans Condensed','DejaVu Sans','Liberation Sans',sans-serif;font-size:11px;letter-spacing:-0.28px;color:#000;">Contact Medium 0</div><div class="a" style="left:200px;top:520px;width:750px;height:21px;background:#cfcfcf"></div><div class="a" style="left:209.3px;top:524px;line-height:16px;font-family:'DejaVu Sans Condensed','DejaVu Sans','Liberation Sans',sans-serif;font-size:11px;font-weight:bold;letter-spacing:0.033px;color:#1c4e9c;">Contact Medium Details</div><div class="a" style="left:204.6px;top:550px;line-height:16px;font-family:'DejaVu Sans Condensed','DejaVu Sans','Liberation Sans',sans-serif;font-size:11px;letter-spacing:-0.088px;color:#000;">Food group (according to Annex III of Regulation (EU) 10/2011 and some more)</div><div class="btn" style="left:206px;top:567px;width:730px;height:21px"></div><div class="a" style="left:206px;top:567px;width:710.200px;height:21px;overflow:hidden"><div class="a" style="left:-206px;top:-567px"><div class="a" style="left:211.4px;top:571px;line-height:16px;font-family:'DejaVu Sans Condensed','DejaVu Sans','Liberation Sans',sans-serif;font-size:11px;letter-spacing:-0.195px;color:#000;">Ethanol 10% - food simulant (non-alcoholic foods or alcoholic foods &lt; 6%) / Ethanol 10% - Lebensmittelsimulanz (nicht alkoholische Lebensmittel oder</div></div></div>
<div class="a" style="left:204.6px;top:590px;line-height:16px;font-family:'DejaVu Sans Condensed','DejaVu Sans','Liberation Sans',sans-serif;font-size:11px;letter-spacing:-0.443px;color:#000;">Simulant</div><div class="btn" style="left:206px;top:607px;width:730px;height:21px"></div><div class="a" style="left:208.3px;top:611px;line-height:16px;font-family:'DejaVu Sans Condensed','DejaVu Sans','Liberation Sans',sans-serif;font-size:11px;letter-spacing:0.14px;color:#000;">Ethanol 10%</div><svg class="a" style="left:922px;top:575px" width="11" height="7"><path d="M1 .8l4.1 4.200L9.2 .8" fill="none" stroke="#555" stroke-width="1.1"/></svg>
<svg class="a" style="left:922px;top:615px" width="11" height="7"><path d="M1 .8l4.1 4.200L9.2 .8" fill="none" stroke="#555" stroke-width="1.1"/></svg>
<div class="a" style="left:204.6px;top:638px;line-height:16px;font-family:'DejaVu Sans Condensed','DejaVu Sans','Liberation Sans',sans-serif;font-size:11px;letter-spacing:-0.126px;color:#000;">Parameters required for estimation of partition coefficient based on Pow:</div><svg class="a" style="left:211.4px;top:661.5px" width="14" height="14"><circle cx="7" cy="7" r="6" fill="#fff" stroke="#333" stroke-width="1"/><circle cx="7" cy="7" r="3.5" fill="#333"/></svg>
<div class="a" style="left:226.2px;top:662px;line-height:16px;font-family:'DejaVu Sans Condensed','DejaVu Sans','Liberation Sans',sans-serif;font-size:11px;letter-spacing:-0.29px;color:#000;">Upper Limit</div><div class="a" style="left:306.4px;top:662px;line-height:16px;font-family:'DejaVu Sans Condensed','DejaVu Sans','Liberation Sans',sans-serif;font-size:11px;letter-spacing:0.3px;color:#000;">A:</div><div class="a" style="left:419.5px;top:662px;line-height:16px;font-family:'DejaVu Sans Condensed','DejaVu Sans','Liberation Sans',sans-serif;font-size:11px;letter-spacing:0.3px;color:#000;">B:</div><div class="inp" style="left:323px;top:659px;width:60px;height:20px"></div><div class="inp" style="left:441px;top:659px;width:61px;height:20px"></div><div class="a" style="left:326.2px;top:662px;line-height:16px;font-family:'DejaVu Sans Condensed','DejaVu Sans','Liberation Sans',sans-serif;font-size:11px;color:#000;">1</div><div class="a" style="left:444.3px;top:662px;line-height:16px;font-family:'DejaVu Sans Condensed','DejaVu Sans','Liberation Sans',sans-serif;font-size:11px;letter-spacing:0.3px;color:#000;">-3</div><svg class="a" style="left:211.4px;top:686.5px" width="14" height="14"><circle cx="7" cy="7" r="6" fill="#fff" stroke="#333" stroke-width="1"/></svg>
<div class="a" style="left:226.2px;top:687px;line-height:16px;font-family:'DejaVu Sans Condensed','DejaVu Sans','Liberation Sans',sans-serif;font-size:11px;letter-spacing:-0.069px;color:#000;">Realistic Case</div><div class="a" style="left:306.4px;top:687px;line-height:16px;font-family:'DejaVu Sans Condensed','DejaVu Sans','Liberation Sans',sans-serif;font-size:11px;letter-spacing:0.3px;color:#000;">A:</div><div class="a" style="left:419.5px;top:687px;line-height:16px;font-family:'DejaVu Sans Condensed','DejaVu Sans','Liberation Sans',sans-serif;font-size:11px;letter-spacing:0.3px;color:#000;">B:</div><div class="inp" style="left:323px;top:684px;width:60px;height:20px"></div><div class="inp" style="left:441px;top:684px;width:61px;height:20px"></div><div class="a" style="left:325.7px;top:687px;line-height:16px;font-family:'DejaVu Sans Condensed','DejaVu Sans','Liberation Sans',sans-serif;font-size:11px;letter-spacing:0.4px;color:#000;">1.07</div><div class="a" style="left:444.3px;top:687px;line-height:16px;font-family:'DejaVu Sans Condensed','DejaVu Sans','Liberation Sans',sans-serif;font-size:11px;letter-spacing:0.15px;color:#000;">-1.82</div><div class="a" style="left:20.3px;top:735px;line-height:16px;font-family:'Liberation Sans',sans-serif;font-size:12px;font-weight:bold;letter-spacing:-0.442px;color:#000;">6.20 | 32-bit</div><div class="a" style="left:100px;top:734px;width:1px;height:15px;background:#d0d0d0"></div>
<svg class="a" style="left:962px;top:741px" width="10" height="10"><g fill="#b8b8b8"><rect x="6" y="0" width="2" height="2"/><rect x="3" y="3" width="2" height="2"/><rect x="6" y="3" width="2" height="2"/><rect x="0" y="6" width="2" height="2"/><rect x="3" y="6" width="2" height="2"/><rect x="6" y="6" width="2" height="2"/></g></svg>
</body></html>
